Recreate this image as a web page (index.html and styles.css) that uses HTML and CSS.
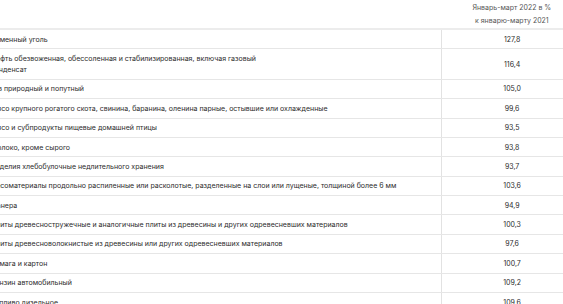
FILE: index.html
```html
<!DOCTYPE html>
<html lang="ru">
<head>
<meta charset="utf-8">
<link rel="stylesheet" href="styles.css">
</head>
<body>
<div class="wrap">
<table class="data">
<thead>
<tr><th class="name"></th><th class="val">Январь-март 2022 в %<br>к январю-марту 2021</th></tr>
</thead>
<tbody>
<tr><td class="name">Каменный уголь</td><td class="val">127,8</td></tr>
<tr><td class="name">Нефть обезвоженная, обессоленная и стабилизированная, включая газовый<br>конденсат</td><td class="val">116,4</td></tr>
<tr><td class="name">Газ природный и попутный</td><td class="val">105,0</td></tr>
<tr><td class="name">Мясо крупного рогатого скота, свинина, баранина, оленина парные, остывшие или охлажденные</td><td class="val">99,6</td></tr>
<tr><td class="name">Мясо и субпродукты пищевые домашней птицы</td><td class="val">93,5</td></tr>
<tr><td class="name">Молоко, кроме сырого</td><td class="val">93,8</td></tr>
<tr><td class="name">Изделия хлебобулочные недлительного хранения</td><td class="val">93,7</td></tr>
<tr><td class="name">Лесоматериалы продольно распиленные или расколотые, разделенные на слои или лущеные, толщиной более 6 мм</td><td class="val">103,6</td></tr>
<tr><td class="name">Фанера</td><td class="val">94,9</td></tr>
<tr><td class="name">Плиты древесностружечные и аналогичные плиты из древесины и других одревесневших материалов</td><td class="val">100,3</td></tr>
<tr><td class="name">Плиты древесноволокнистые из древесины или других одревесневших материалов</td><td class="val">97,6</td></tr>
<tr><td class="name">Бумага и картон</td><td class="val">100,7</td></tr>
<tr><td class="name">Бензин автомобильный</td><td class="val">109,2</td></tr>
<tr><td class="name">Топливо дизельное</td><td class="val">109,6</td></tr>
</tbody>
</table>
</div>
</body>
</html>
```
FILE: styles.css
```css
html, body {
  margin: 0;
  padding: 0;
  background: #fff;
  overflow: hidden;
}
.wrap {
  width: 563px;
  height: 304px;
  overflow: hidden;
}
.data {
  margin-left: -9px;
  width: 591px;
  border-collapse: collapse;
  font-family: Inter, "Noto Sans", sans-serif;
  font-size: 7px;
  color: #2b2b2b;
}
.data th {
  font-weight: normal;
  color: #555;
  line-height: 13px;
  height: 28px;
  padding: 0;
  border-bottom: 2px solid #ececec;
  vertical-align: middle;
}
.data td {
  line-height: 11px;
  padding: 3.7px 0;
  border-bottom: 1px solid #e6e6e6;
  vertical-align: middle;
}
.data .name {
  width: 451px;
  text-align: left;
}
.data .val {
  width: 140px;
  text-align: center;
}
.data td.val {
  border-left: 1px solid #e2e2e2;
}
```
